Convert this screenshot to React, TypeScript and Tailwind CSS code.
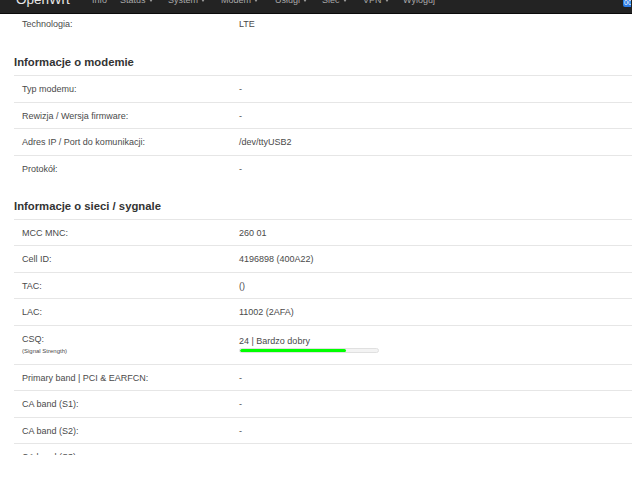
import React from "react";

const Caret = () => (
  <span className="inline-block ml-[3px] w-0 h-0 border-l-[2.5px] border-r-[2.5px] border-t-[3px] border-l-transparent border-r-transparent border-t-[#9d9d9d] align-middle" />
);

const navItems: { label: string; w: string; caret: boolean }[] = [
  { label: "Info", w: "w-[28px]", caret: false },
  { label: "Status", w: "w-[48px]", caret: true },
  { label: "System", w: "w-[53px]", caret: true },
  { label: "Modem", w: "w-[54px]", caret: true },
  { label: "Usługi", w: "w-[47px]", caret: true },
  { label: "Sieć", w: "w-[41px]", caret: true },
  { label: "VPN", w: "w-[40px]", caret: true },
  { label: "Wyloguj", w: "w-[60px]", caret: false },
];

function Row({ label, value, first }: { label: string; value: string; first?: boolean }) {
  return (
    <div
      className={
        "flex items-center h-[26.5px] pt-[1px] text-[9px] leading-[12px] text-[#4a4a4a] " +
        (first ? "" : "border-t border-[#e6e6e6]")
      }
    >
      <div className="w-[225px] pl-[8px]">{label}</div>
      <div className="flex-1">{value}</div>
    </div>
  );
}

function Heading({ children }: { children: React.ReactNode }) {
  return (
    <div className="h-[37.5px] flex items-end pb-[6px] text-[11.3px] leading-[13px] font-bold text-[#333]">
      {children}
    </div>
  );
}

export default function App() {
  return (
    <div className="w-[640px] h-[489px] bg-white overflow-hidden font-['Liberation_Sans',Arial,sans-serif]">
      <div className="w-[632px]">
        <nav className="h-[14px] bg-[#232323] border-b border-[#0a0a0a] flex overflow-hidden">
          <div className="pl-[16px] w-[92px] -mt-[7px] text-[13.5px] leading-none text-[#e8e8e8] shrink-0">
            OpenWrt
          </div>
          {navItems.map((n) => (
            <div
              key={n.label}
              className={n.w + " shrink-0 -mt-[4.5px] text-[9px] leading-none text-[#a8a8a8] whitespace-nowrap"}
            >
              {n.label}
              {n.caret && <Caret />}
            </div>
          ))}
          <div className="flex-1" />
          <div className="w-[8px] h-[7px] mr-[1px] bg-[#2c7be5] rounded-bl-[2px] overflow-hidden text-[7px] leading-none text-white pl-[1px]">
            <span className="relative -top-[1px]">00</span>
          </div>
        </nav>
        <div className="h-[441px] overflow-hidden pl-[14px]">
          <div className="flex items-center h-[23.5px] pb-[3.5px] text-[9px] leading-[12px] text-[#4a4a4a]">
            <div className="w-[225px] pl-[8px]">Technologia:</div>
            <div className="flex-1">LTE</div>
          </div>

          <Heading>Informacje o modemie</Heading>
          <Row label="Typ modemu:" value="-" />
          <Row label="Rewizja / Wersja firmware:" value="-" />
          <Row label="Adres IP / Port do komunikacji:" value="/dev/ttyUSB2" />
          <Row label="Protokół:" value="-" />

          <Heading>Informacje o sieci / sygnale</Heading>
          <Row label="MCC MNC:" value="260 01" />
          <Row label="Cell ID:" value="4196898 (400A22)" />
          <Row label="TAC:" value="()" />
          <Row label="LAC:" value="11002 (2AFA)" />

          <div className="flex items-start h-[39px] border-t border-[#e6e6e6] text-[#4a4a4a]">
            <div className="w-[225px] pl-[8px] pt-[7.5px]">
              <div className="text-[9px] leading-[12px]">CSQ:</div>
              <div className="mt-[2px] text-[6px] leading-[9px]">(Signal Strength)</div>
            </div>
            <div className="flex-1 pt-[9.5px]">
              <div className="text-[9px] leading-[12px]">24 | Bardzo dobry</div>
              <div className="mt-[1px] w-[140px] h-[5px] rounded-full bg-[#f3f3f3] border border-[#e0e0e0] overflow-hidden">
                <div className="h-full w-[77%] bg-[#00ff00] rounded-full" />
              </div>
            </div>
          </div>

          <Row label="Primary band | PCI & EARFCN:" value="-" />
          <Row label="CA band (S1):" value="-" />
          <Row label="CA band (S2):" value="-" />
          <Row label="CA band (S3):" value="-" />
        </div>
      </div>
    </div>
  );
}
